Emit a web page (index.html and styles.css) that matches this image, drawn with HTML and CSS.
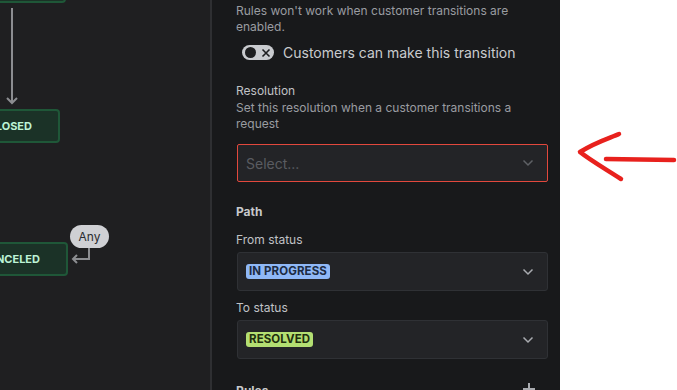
FILE: index.html
```html
<!DOCTYPE html>
<html lang="en">

<head>
    <meta charset="UTF-8">
    <meta name="viewport" content="width=device-width, initial-scale=1.0">
    <title>Transition settings</title>
    <link rel="stylesheet" href="styles.css">
</head>

<body>
    <div class="canvas">
        <div class="node node-top"></div>
        <div class="edge-down"></div>
        <svg class="arrow-head" width="12" height="8" viewBox="0 0 12 8">
            <path d="M1 1 L6 6 L11 1" fill="none" stroke="#8c8d91" stroke-width="2"/>
        </svg>
        <div class="node node-closed">CLOSED</div>
        <div class="node node-canceled">CANCELED</div>
        <div class="any-pill">Any</div>
        <svg class="any-link" width="40" height="24" viewBox="0 0 40 24">
            <path d="M19 0 V11 H3 M7 7 L3 11 L7 15" fill="none" stroke="#8c8d91" stroke-width="2"/>
        </svg>
    </div>

    <div class="panel">
        <p class="hint">Rules won't work when customer transitions are enabled.</p>
        <label class="toggle-row">
            <span class="toggle">
                <span class="knob"></span>
                <svg class="cross" width="10" height="10" viewBox="0 0 10 10">
                    <path d="M1.5 1.5 L8.5 8.5 M8.5 1.5 L1.5 8.5" stroke="#1d1e20" stroke-width="1.6"/>
                </svg>
            </span>
            Customers can make this transition
        </label>

        <div class="field resolution">
            <div class="field-label">Resolution</div>
            <p class="hint">Set this resolution when a customer transitions a request</p>
            <div class="select select-error">
                <span class="placeholder">Select...</span>
                <svg class="chevron" width="12" height="8" viewBox="0 0 12 8">
                    <path d="M1.5 1.5 L6 6 L10.5 1.5" fill="none" stroke="#5f6166" stroke-width="1.5"/>
                </svg>
            </div>
        </div>

        <h4 class="section-title">Path</h4>
        <div class="field from-field">
            <div class="field-label">From status</div>
            <div class="select">
                <span class="lozenge lozenge-blue">IN PROGRESS</span>
                <svg class="chevron" width="12" height="8" viewBox="0 0 12 8">
                    <path d="M1.5 1.5 L6 6 L10.5 1.5" fill="none" stroke="#a9abb0" stroke-width="1.5"/>
                </svg>
            </div>
        </div>
        <div class="field">
            <div class="field-label">To status</div>
            <div class="select">
                <span class="lozenge lozenge-green">RESOLVED</span>
                <svg class="chevron" width="12" height="8" viewBox="0 0 12 8">
                    <path d="M1.5 1.5 L6 6 L10.5 1.5" fill="none" stroke="#a9abb0" stroke-width="1.5"/>
                </svg>
            </div>
        </div>

        <div class="section-row">
            <h4 class="section-title">Rules</h4>
            <svg class="plus" width="14" height="14" viewBox="0 0 14 14">
                <path d="M7 1 V13 M1 7 H13" stroke="#a9abb0" stroke-width="2"/>
            </svg>
        </div>
    </div>

    <div class="note">
        <svg width="117" height="390" viewBox="0 0 117 390">
            <path d="M59 134 C50 138 36 142 20 152 C30 160 44 168 61 179" fill="none" stroke="#e8211d" stroke-width="4.5" stroke-linecap="round" stroke-linejoin="round"/>
            <path d="M46 159 L114 160" fill="none" stroke="#e8211d" stroke-width="4.5" stroke-linecap="round"/>
        </svg>
    </div>
</body>

</html>
```

FILE: styles.css
```css
body {
  margin: 0;
  height: 390px;
  display: flex;
  overflow: hidden;
  font-family: Inter, 'Liberation Sans', Arial, sans-serif;
  background-color: #fff;
}
.canvas {
  position: relative;
  width: 210px;
  flex-shrink: 0;
  background-color: #1f1f21;
  border-right: 2px solid #2e2f32;
  overflow: hidden;
}
.node {
  position: absolute;
  box-sizing: border-box;
  background-color: #1b3227;
  border: 2px solid #1f5738;
  border-radius: 4px;
  color: #bdf3d6;
  font-size: 11px;
  font-weight: 700;
  display: flex;
  align-items: center;
  justify-content: flex-end;
  padding-right: 26px;
}
.node-top {
  left: -60px;
  top: -30px;
  width: 126px;
  height: 33px;
}
.node-closed {
  left: -60px;
  top: 109px;
  width: 120px;
  height: 34px;
}
.node-canceled {
  left: -60px;
  top: 242px;
  width: 128px;
  height: 34px;
}
.edge-down {
  position: absolute;
  left: 11px;
  top: 8px;
  width: 2px;
  height: 94px;
  background-color: #8c8d91;
}
.arrow-head {
  position: absolute;
  left: 6px;
  top: 97px;
}
.any-pill {
  position: absolute;
  left: 70px;
  top: 225px;
  width: 39px;
  height: 23px;
  border-radius: 12px;
  background-color: #cfd0d4;
  color: #2a2b2f;
  font-size: 12px;
  display: flex;
  align-items: center;
  justify-content: center;
}
.any-link {
  position: absolute;
  left: 70px;
  top: 248px;
}
.panel {
  width: 348px;
  flex-shrink: 0;
  box-sizing: border-box;
  padding: 3px 12px 0 24px;
  background-color: #18191b;
  color: #c7c9cc;
}
.hint {
  margin: 0;
  font-size: 12px;
  line-height: 16px;
  color: #9a9ca1;
}
.toggle-row {
  display: flex;
  align-items: center;
  gap: 9px;
  height: 17px;
  margin: 9px 0 0 6px;
  font-size: 14px;
  color: #c9cbce;
}
.toggle {
  position: relative;
  width: 32px;
  height: 15px;
  border-radius: 8px;
  background-color: #c9cbcf;
  display: flex;
  align-items: center;
  justify-content: space-between;
  padding: 0 3px;
  box-sizing: border-box;
}
.knob {
  width: 11px;
  height: 11px;
  border-radius: 50%;
  background-color: #1d1e20;
}
.field {
  margin-top: 9px;
}
.resolution {
  margin-top: 21px;
}
.from-field {
  margin-top: 12px;
}
.field-label {
  font-size: 12px;
  line-height: 16px;
  color: #c0c2c6;
  margin-bottom: 4px;
}
.resolution .field-label {
  line-height: 17px;
  margin-bottom: 0;
}
.resolution .hint {
  padding-top: 1px;
  margin-bottom: 12px;
}
.select {
  margin-left: 1px;
  height: 39px;
  box-sizing: border-box;
  border: 1px solid #2f3135;
  border-radius: 3px;
  background-color: #232427;
  display: flex;
  align-items: center;
  justify-content: space-between;
  padding: 0 13px 0 8px;
}
.select-error {
  height: 38px;
  border-color: #e2483d;
  border-radius: 2px;
}
.placeholder {
  font-size: 14px;
  color: #5a5c61;
}
.lozenge {
  font-size: 11.5px;
  font-weight: 700;
  line-height: 15px;
  padding: 0 3px;
  border-radius: 3px;
  letter-spacing: 0.1px;
}
.lozenge-blue {
  background-color: #8fb8f6;
  color: #1c2b42;
}
.lozenge-green {
  background-color: #b3df72;
  color: #1f2e0e;
}
.section-title {
  margin: 22px 0 0;
  font-size: 12px;
  line-height: 16px;
  font-weight: 700;
  color: #c7c9cc;
}
.section-row {
  display: flex;
  justify-content: space-between;
  align-items: flex-start;
  padding-right: 12px;
}
.section-row .section-title {
  margin-top: 24px;
}
.plus {
  margin-top: 23px;
}
.note {
  flex: 1;
  background-color: #fff;
}
.note svg {
  display: block;
}
```
